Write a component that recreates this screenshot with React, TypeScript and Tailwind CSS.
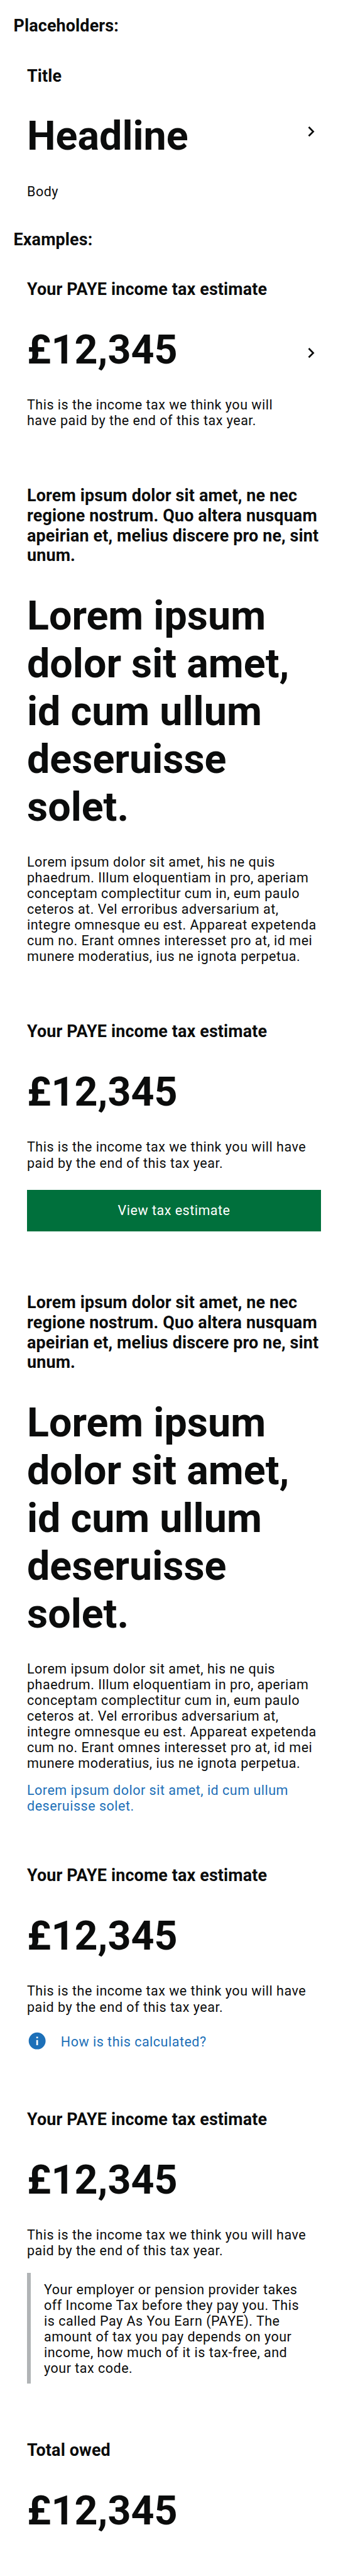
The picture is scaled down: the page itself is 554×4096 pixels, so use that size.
import type { ReactNode } from "react";

const LOREM_TITLE =
  "Lorem ipsum dolor sit amet, ne nec regione nostrum. Quo altera nusquam apeirian et, melius discere pro ne, sint unum.";
const LOREM_HEADLINE = "Lorem ipsum dolor sit amet, id cum ullum deseruisse solet.";
const LOREM_BODY =
  "Lorem ipsum dolor sit amet, his ne quis phaedrum. Illum eloquentiam in pro, aperiam conceptam complectitur cum in, eum paulo ceteros at. Vel erroribus adversarium at, integre omnesque eu est. Appareat expetenda cum no. Erant omnes interesset pro at, id mei munere moderatius, ius ne ignota perpetua.";
const TAX_TITLE = "Your PAYE income tax estimate";
const TAX_BODY = "This is the income tax we think you will have paid by the end of this tax year.";

function SectionLabel({ children }: { children: ReactNode }) {
  return (
    <h2 className="px-[21.5px] text-[26.92px] leading-[31.78px] font-bold tracking-[0.135px]">{children}</h2>
  );
}

function ChevronRight() {
  return (
    <svg viewBox="0 0 24 24" className="mb-[3.5px] size-[32.3px] shrink-0 self-center fill-current" aria-hidden="true">
      <path d="M10 6L8.59 7.41 13.17 12l-4.58 4.59L10 18l6-6z" />
    </svg>
  );
}

function InfoIcon() {
  return (
    <svg viewBox="0 0 24 24" className="size-[32.3px] shrink-0 fill-current" aria-hidden="true">
      <path d="M12 2C6.48 2 2 6.48 2 12s4.48 10 10 10 10-4.48 10-10S17.52 2 12 2zm1 15h-2v-6h2v6zm0-8h-2V7h2v2z" />
    </svg>
  );
}

type CardProps = {
  title: string;
  headline: string;
  body?: string;
  chevron?: boolean;
  className: string;
  children?: ReactNode;
};

function HeadlineCard({ title, headline, body, chevron, className, children }: CardProps) {
  return (
    <section className={`mx-[43px] flex ${className}`}>
      <div className="min-w-0 flex-1">
        <h3 className="text-[26.92px] leading-[31.78px] font-bold tracking-[0.135px]">{title}</h3>
        <p className="mt-[42px] text-[64.6px] leading-[75.85px] font-bold tracking-normal">{headline}</p>
        {body && <p className="mt-[36.4px]">{body}</p>}
        {children}
      </div>
      {chevron && <ChevronRight />}
    </section>
  );
}

export default function App() {
  return (
    <main className="h-[4096px] w-[554px] overflow-hidden bg-white pt-[26.2px] font-[Roboto,sans-serif] text-[21.53px] leading-[25.1px] tracking-[0.5px] text-[#0b0c0c]">
      <SectionLabel>Placeholders:</SectionLabel>
      <HeadlineCard className="mt-[47.7px]" title="Title" headline="Headline" body="Body" chevron />

      <div className="mt-[49.1px]">
        <SectionLabel>Examples:</SectionLabel>
      </div>
      <HeadlineCard className="mt-[47.4px]" title={TAX_TITLE} headline="£12,345" body={TAX_BODY} chevron />

      <HeadlineCard className="mt-[91.9px]" title={LOREM_TITLE} headline={LOREM_HEADLINE} body={LOREM_BODY} />

      <HeadlineCard className="mt-[91.9px]" title={TAX_TITLE} headline="£12,345" body={TAX_BODY}>
        <button className="mt-[30.5px] flex h-[65.4px] w-full items-center justify-center bg-[#00703c] text-white">
          View tax estimate
        </button>
      </HeadlineCard>

      <HeadlineCard className="mt-[98.6px]" title={LOREM_TITLE} headline={LOREM_HEADLINE} body={LOREM_BODY}>
        <a className="mt-[17.5px] block text-[#1d70b8]">Lorem ipsum dolor sit amet, id cum ullum deseruisse solet.</a>
      </HeadlineCard>

      <HeadlineCard className="mt-[83.3px]" title={TAX_TITLE} headline="£12,345" body={TAX_BODY}>
        <a className="mt-[25.3px] flex items-center gap-[21.5px] text-[#1d70b8]">
          <InfoIcon />
          <span className="pt-[2px]">How is this calculated?</span>
        </a>
      </HeadlineCard>

      <HeadlineCard className="mt-[93.6px]" title={TAX_TITLE} headline="£12,345" body={TAX_BODY}>
        <div className="mt-[22.8px] flex">
          <div className="w-[5.5px] shrink-0 bg-[#b1b4b6]" />
          <p className="px-[21.5px] pt-[13.9px] pb-[11.8px]">
            Your employer or pension provider takes off Income Tax before they pay you. This is called Pay As You Earn
            (PAYE). The amount of tax you pay depends on your income, how much of it is tax-free, and your tax code.
          </p>
        </div>
      </HeadlineCard>

      <HeadlineCard className="mt-[90.8px]" title="Total owed" headline="£12,345" />
    </main>
  );
}
